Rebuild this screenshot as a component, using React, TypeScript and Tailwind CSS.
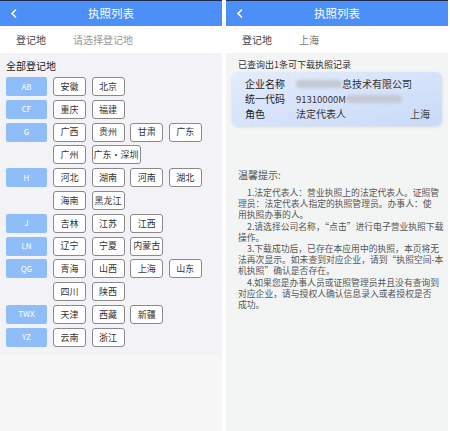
import { ReactNode } from "react";

const FONT = { fontFamily: '"Noto Sans CJK SC", "Noto Sans", sans-serif' };

const GROUPS: { key: string; cities: string[] }[] = [
  { key: "AB", cities: ["安徽", "北京"] },
  { key: "CF", cities: ["重庆", "福建"] },
  { key: "G", cities: ["广西", "贵州", "甘肃", "广东", "广州", "广东·深圳"] },
  { key: "H", cities: ["河北", "湖南", "河南", "湖北", "海南", "黑龙江"] },
  { key: "J", cities: ["吉林", "江苏", "江西"] },
  { key: "LN", cities: ["辽宁", "宁夏", "内蒙古"] },
  { key: "QG", cities: ["青海", "山西", "上海", "山东", "四川", "陕西"] },
  { key: "TWX", cities: ["天津", "西藏", "新疆"] },
  { key: "YZ", cities: ["云南", "浙江"] },
];

const TIPS: string[][] = [
  ["1.法定代表人：营业执照上的法定代表人。证照管", "理员：法定代表人指定的执照管理员。办事人：使", "用执照办事的人。"],
  ["2.请选择公司名称，\u201c点击\u201d进行电子营业执照下载", "操作。"],
  ["3.下载成功后，已存在本应用中的执照，本页将无", "法再次显示。如未查到对应企业，请到\u201c执照空间-本", "机执照\u201d确认是否存在。"],
  ["4.如果您是办事人员或证照管理员并且没有查询到", "对应企业，请与授权人确认信息录入或者授权是否", "成功。"],
];

const Header = (): ReactNode => (
  <div className="flex flex-col">
    <div className="h-px bg-[#1d2b4f]" />
    <div className="relative flex h-[25px] items-center justify-center bg-[#4c8ff6]">
      <svg className="absolute left-[10px] top-[8px]" width="7" height="9" viewBox="0 0 7 9">
        <path d="M5.5 1 L2 4.5 L5.5 8" fill="none" stroke="white" strokeWidth="1.6" strokeLinecap="round" strokeLinejoin="round" />
      </svg>
      <span className="text-[11.5px] text-white">执照列表</span>
    </div>
  </div>
);

const FilterRow = ({ value, muted }: { value: string; muted: boolean }): ReactNode => (
  <div className="flex h-[27px] items-center bg-white pl-[16px] text-[10px]">
    <span className="w-[57px] text-[#444]">登记地</span>
    <span className={muted ? "text-[#999]" : "text-[#777]"}>{value}</span>
  </div>
);

const Blur = ({ w }: { w: string }): ReactNode => (
  <span className={`inline-block h-[8px] rounded-sm bg-[#c4c9d4] blur-[1.5px] ${w}`} />
);

const App = (): ReactNode => {
  return (
    <div className="flex h-[431px] w-[450px] overflow-hidden bg-white" style={FONT}>
      {/* left screen */}
      <div className="flex w-[222px] flex-col bg-[#f8f7f8]">
        <Header />
        <FilterRow value="请选择登记地" muted />
        <div className="flex flex-col bg-[#f2f2f7] px-[6px] pb-[8px] pt-[6px]">
          <p className="h-[14px] text-[10px] leading-[14px] text-[#222]">全部登记地</p>
          <div className="mt-[4px] flex flex-col gap-[3.8px]">
            {GROUPS.map((g) => (
              <div key={g.key} className="flex items-start gap-[6px]">
                <div className="flex h-[19px] w-[41px] shrink-0 items-center justify-center rounded-[2px] bg-[#8fbdf7] text-[8px] text-white">
                  {g.key}
                </div>
                <div className="flex w-[152px] flex-wrap gap-x-[5.6px] gap-y-[3.8px]">
                  {g.cities.map((c) => (
                    <div
                      key={c}
                      className={`flex h-[19px] items-center justify-center whitespace-nowrap rounded-[3px] border border-[#8a8a8a] bg-white text-[9px] text-[#333] ${c.length > 3 ? "w-[49px]" : "w-[33px]"}`}
                    >
                      {c}
                    </div>
                  ))}
                </div>
              </div>
            ))}
          </div>
        </div>
      </div>

      <div className="w-[4px]" />

      {/* right screen */}
      <div className="flex w-[222px] flex-col bg-[#f3f5f5]">
        <Header />
        <FilterRow value="上海" muted={false} />
        <div className="flex flex-col px-[6px] pt-[5px]">
          <p className="pl-[6px] text-[9px] leading-[14px] text-[#333]">已查询出1条可下载执照记录</p>
          <div className="flex h-[54px] flex-col justify-center gap-[1px] rounded-[6px] bg-gradient-to-br from-[#e4ecfb] to-[#c8daf9] pl-[13px] pr-[12px] text-[10px] leading-[14px] text-[#222] shadow-[0_1px_3px_rgba(120,140,180,0.25)]">
            <div className="flex items-center">
              <span className="w-[51px]">企业名称</span>
              <Blur w="w-[46px]" />
              <span className="text-[#333]">息技术有限公司</span>
            </div>
            <div className="flex items-center">
              <span className="w-[51px]">统一代码</span>
              <span className="text-[9.5px] text-[#333]">91310000M</span>
              <Blur w="w-[56px]" />
            </div>
            <div className="flex items-center">
              <span className="w-[51px]">角色</span>
              <span className="text-[#333]">法定代表人</span>
              <span className="ml-auto text-[#444]">上海</span>
            </div>
          </div>
          <p className="mt-[42px] pl-[6px] text-[10px] leading-[14px] text-[#555]">温馨提示:</p>
          <div className="mt-[5px] flex flex-col pl-[6px] text-[8.8px] leading-[11.2px] text-[#555]">
            {TIPS.map((t, i) => (
              <div key={i} className="flex flex-col">
                {t.map((line, j) => (
                  <span key={j} className={`whitespace-nowrap ${j === 0 ? "pl-[9px]" : ""}`}>
                    {line}
                  </span>
                ))}
              </div>
            ))}
          </div>
        </div>
      </div>
    </div>
  );
};

export default App;
